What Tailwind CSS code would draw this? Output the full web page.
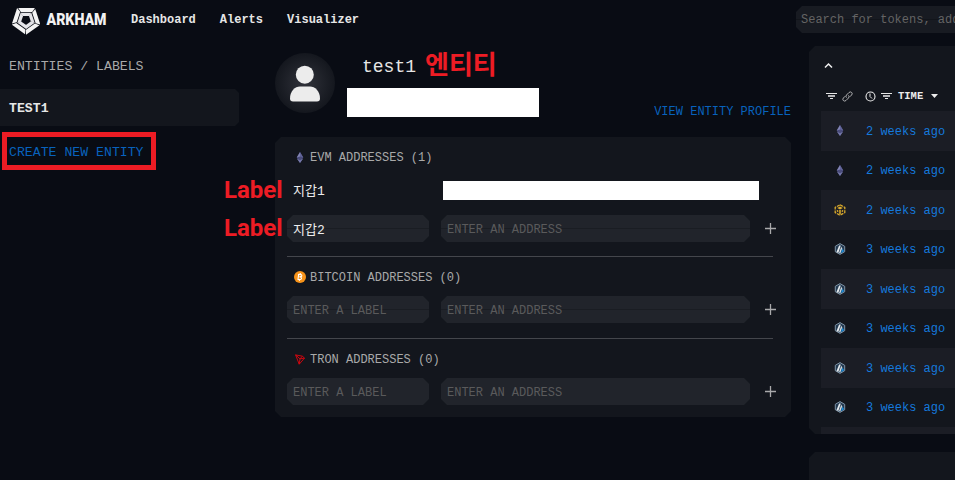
<!DOCTYPE html>
<html lang="en">
<head>
    <meta charset="UTF-8">
    <meta name="viewport" content="width=device-width, initial-scale=1.0">
    <title>Arkham - Entities / Labels</title>
    <script src="https://cdn.jsdelivr.net/npm/@tailwindcss/browser@4"></script>
</head>
<body class="relative h-screen overflow-hidden bg-[#090c14] font-['Liberation_Mono','Noto_Sans_CJK_KR',monospace] text-xs text-[#a9a9a9]">

    <!-- Shared icons -->
    <svg class="hidden">
        <symbol id="blade" viewBox="-14 -14 28 28" overflow="visible">
            <path d="M-7.600-12H8.700L6.100-8H-5z" fill="#f4f4f4"/>
            <path d="M-5.400-7.200H5.200L3-4H-3.200z" fill="#e4e4e8"/>
        </symbol>
        <symbol id="eth" viewBox="0 0 10 14">
            <path d="M5 1L8.500 7 5 13 1.500 7z" fill="#4a4c7c"/>
            <path d="M5 1V6L1.500 7z" fill="#8183b3"/>
            <path d="M5 1L8.500 7 5 6z" fill="#62659a"/>
            <path d="M1.500 8L5 10 8.500 8 5 13z" fill="#7679aa"/>
        </symbol>
        <symbol id="bnb" viewBox="0 0 12 12">
            <path d="M6 .8L10.800 3.400V8.600L6 11.200 1.200 8.600V3.400z" fill="none" stroke="#d9a92c" stroke-width="1.300" stroke-dasharray="3.200 .9"/>
            <path d="M3.200 4L6 2.600 8.800 4 6 5.500zM5.200 6h1.600v4H5.200zM2.800 5.800l1.500.8v1.600l-1.500-.8zM9.200 5.800l-1.500.8v1.600l1.500-.8z" fill="#d9a92c"/>
        </symbol>
        <symbol id="arb" viewBox="0 0 12 12">
            <path d="M6 .6L10.700 3.300V8.700L6 11.400 1.300 8.700V3.300z" fill="#22384f" stroke="#8095a8" stroke-width="1"/>
            <path d="M5.100 2.600H6.800L4.300 9.900 2.500 8.900z" fill="#e4e9ed"/>
            <path d="M7.300 3.400L8.200 5.400 6.300 10.500 5 10.100z" fill="#cfd9e0"/>
            <path d="M8.500 5.400L10 8.300 6.900 10.300z" fill="#1c8fdc"/>
        </symbol>
        <symbol id="filter" viewBox="0 0 11 10">
            <path d="M0 2.500h11" stroke="#e6e6e6"/>
            <path d="M2 5h7" stroke="#b5b5b8" stroke-width="2"/>
            <path d="M4 7.500h3" stroke="#e6e6e6"/>
        </symbol>
        <symbol id="plus" viewBox="0 0 11 11">
            <path d="M5.500 0v11M0 5.500h11" stroke="#a9a9ab" stroke-width="1.300"/>
        </symbol>
    </svg>

    <!-- Header -->
    <header class="flex h-[39px] items-center">
        <svg class="ml-3 h-[28px] w-[28px] shrink-0 translate-y-px" viewBox="-14 -13 28 28">
            <g transform="scale(1.020 1)">
                <use href="#blade" x="-14" y="-14" width="28" height="28"/>
                <use href="#blade" x="-14" y="-14" width="28" height="28" transform="rotate(72)"/>
                <use href="#blade" x="-14" y="-14" width="28" height="28" transform="rotate(144)"/>
                <use href="#blade" x="-14" y="-14" width="28" height="28" transform="rotate(216)"/>
                <use href="#blade" x="-14" y="-14" width="28" height="28" transform="rotate(288)"/>
            </g>
        </svg>
        <svg class="ml-[6px] h-6 w-[62px] shrink-0" viewBox="0 0 62 24">
            <text x=".5" y="17.300" textLength="60" lengthAdjust="spacingAndGlyphs" font-family="Roboto, sans-serif" font-weight="900" font-size="17" fill="#f2f2f2">ARKHAM</text>
        </svg>
        <nav class="ml-[23px] flex gap-6 pt-px font-bold text-[#e6e6e6]">
            <a href="#">Dashboard</a>
            <a href="#">Alerts</a>
            <a href="#">Visualizer</a>
        </nav>
        <div class="ml-auto h-[27px] w-[159px] overflow-hidden bg-[#181b22] bg-[linear-gradient(transparent_13px,#12151b_13px,#12151b_14px,transparent_14px)] pt-px pl-[5px] leading-[27px] whitespace-nowrap text-[#646464] [clip-path:polygon(6px_0,100%_0,100%_100%,6px_100%,0_21px,0_6px)]">Search for tokens, addresses</div>
    </header>

    <div class="flex">
        <!-- Sidebar -->
        <aside class="w-[239px] shrink-0 pt-[18px] text-[13.2px] leading-5">
            <h2 class="pl-[9px]">ENTITIES / LABELS</h2>
            <div class="mt-3 flex h-[37px] items-center bg-[#13161d] pt-[2px] pl-[9px] font-bold text-[#e6e6e6] [clip-path:polygon(0_0,235px_0,100%_4px,100%_33px,235px_100%,0_100%)]">TEST1</div>
            <a href="#" class="mt-[17px] block pl-[9px] text-[#0862bd]">CREATE NEW ENTITY</a>
        </aside>

        <!-- Entity -->
        <main class="ml-9 w-[516px] shrink-0 pt-[14px]">
            <div class="flex h-[84px]">
                <svg class="h-[60px] w-[60px] shrink-0" viewBox="0 0 60 60">
                    <defs>
                        <radialGradient id="avatar">
                            <stop offset="0" stop-color="#30323a"/>
                            <stop offset="1" stop-color="#14171e"/>
                        </radialGradient>
                    </defs>
                    <circle cx="30" cy="30" r="30" fill="url(#avatar)"/>
                    <circle cx="29.800" cy="21.700" r="9" fill="#ececec"/>
                    <path d="M15 45.500C15 38 20 33.500 25 33.500H35C40 33.500 45 38 45 45.500Q45 48.500 42 48.500H18Q15 48.500 15 45.500z" fill="#ececec"/>
                </svg>
                <div class="ml-3 pt-[2px]">
                    <h1 class="pl-[15px] text-lg leading-6 text-[#e6e6e6]">test1</h1>
                    <div class="mt-[9px] h-[29px] w-[192px] bg-white"></div>
                </div>
                <a href="#" class="ml-auto pt-[51px] whitespace-nowrap text-[#0862bd]">VIEW ENTITY PROFILE</a>
            </div>

            <section class="h-[280px] bg-[#13161d] px-3 pt-[10px] [clip-path:polygon(6px_0,510px_0,100%_6px,100%_274px,510px_100%,6px_100%,0_274px,0_6px)]">
                <h3 class="flex h-5 items-center gap-[5px] pl-2">
                    <svg class="h-[13px] w-[10px]"><use href="#eth"/></svg>
                    <span class="pt-px">EVM ADDRESSES (1)</span>
                </h3>
                <div class="mt-[10px] flex h-[27px] items-center">
                    <span class="w-[156px] pt-[3px] pl-[6px] text-[13px] text-[#ececec]">지갑1</span>
                    <div class="h-[19px] w-[316px] bg-white"></div>
                </div>
                <div class="mt-[11px] flex h-[27px] items-center gap-3">
                    <div class="h-[27px] w-[142px] bg-[#21242b] bg-[linear-gradient(transparent_13px,#1a1d23_13px,#1a1d23_14px,transparent_14px)] pt-[2px] pl-[6px] text-[13px] leading-[27px] text-[#ececec] [clip-path:polygon(6px_0,136px_0,100%_6px,100%_21px,136px_100%,6px_100%,0_21px,0_6px)]">지갑2</div>
                    <div class="h-[27px] w-[309px] bg-[#21242b] bg-[linear-gradient(transparent_13px,#1a1d23_13px,#1a1d23_14px,transparent_14px)] pt-[2px] pl-[6px] leading-[27px] text-[#5a5a5b] [clip-path:polygon(6px_0,303px_0,100%_6px,100%_21px,303px_100%,6px_100%,0_21px,0_6px)]">ENTER AN ADDRESS</div>
                    <svg class="ml-[3px] h-[11px] w-[11px]"><use href="#plus"/></svg>
                </div>

                <div class="mt-[14px] h-px w-[486px] bg-[#44464c]"></div>
                <h3 class="mt-[10px] flex h-5 items-center gap-[5px] pl-[7px]">
                    <svg class="-mr-px h-3 w-3" viewBox="0 0 12 12">
                        <circle cx="6" cy="6" r="6" fill="#f7931a"/>
                        <path d="M4.700 3.200L3.900 8.800M4.500 3.300L6.800 3.600Q8.200 4 7.700 5.100 7.200 5.900 5.300 5.800 7.700 6 7.500 7.500 7.200 8.900 4.300 8.500M6.400 2.100L6.200 3.400M5.600 8.700L5.400 9.900" fill="none" stroke="#fff" stroke-width="1.100"/>
                    </svg>
                    <span class="pt-px">BITCOIN ADDRESSES (0)</span>
                </h3>
                <div class="mt-[9px] flex h-[27px] items-center gap-3">
                    <div class="h-[27px] w-[142px] bg-[#21242b] bg-[linear-gradient(transparent_13px,#1a1d23_13px,#1a1d23_14px,transparent_14px)] pt-[2px] pl-[6px] leading-[27px] text-[#5a5a5b] [clip-path:polygon(6px_0,136px_0,100%_6px,100%_21px,136px_100%,6px_100%,0_21px,0_6px)]">ENTER A LABEL</div>
                    <div class="h-[27px] w-[309px] bg-[#21242b] bg-[linear-gradient(transparent_13px,#1a1d23_13px,#1a1d23_14px,transparent_14px)] pt-[2px] pl-[6px] leading-[27px] text-[#5a5a5b] [clip-path:polygon(6px_0,303px_0,100%_6px,100%_21px,303px_100%,6px_100%,0_21px,0_6px)]">ENTER AN ADDRESS</div>
                    <svg class="ml-[3px] h-[11px] w-[11px]"><use href="#plus"/></svg>
                </div>

                <div class="mt-[15px] h-px w-[486px] bg-[#44464c]"></div>
                <h3 class="mt-[10px] flex h-5 items-center gap-[5px] pl-2">
                    <svg class="h-[11px] w-[10px]" viewBox="0 0 10 11">
                        <path d="M.6.900L7.400 2.200 9.500 4.100 4.200 10.200zM.6.900L5 4.900 9.500 4.100M5 4.900L7.400 2.200M5 4.900L4.200 10.200" fill="none" stroke="#e0060f" stroke-width=".9"/>
                    </svg>
                    <span class="pt-px">TRON ADDRESSES (0)</span>
                </h3>
                <div class="mt-[9px] flex h-[27px] items-center gap-3">
                    <div class="h-[27px] w-[142px] bg-[#21242b] pt-[2px] pl-[6px] leading-[27px] text-[#5a5a5b] [clip-path:polygon(6px_0,136px_0,100%_6px,100%_21px,136px_100%,6px_100%,0_21px,0_6px)]">ENTER A LABEL</div>
                    <div class="h-[27px] w-[309px] bg-[#21242b] pt-[2px] pl-[6px] leading-[27px] text-[#5a5a5b] [clip-path:polygon(6px_0,303px_0,100%_6px,100%_21px,303px_100%,6px_100%,0_21px,0_6px)]">ENTER AN ADDRESS</div>
                    <svg class="ml-[3px] h-[11px] w-[11px]"><use href="#plus"/></svg>
                </div>
            </section>
        </main>

        <!-- Transfers -->
        <div class="ml-[18px] w-[146px] shrink-0 pt-[7px]">
            <section class="h-[388px] overflow-hidden bg-[#13161d] pl-3 [clip-path:polygon(6px_0,100%_0,100%_100%,6px_100%,0_382px,0_6px)]">
                <svg class="mt-[16px] ml-[3px] h-[7px] w-[9px]" viewBox="0 0 9 7">
                    <path d="M1 5.500L4.500 2 8 5.500" fill="none" stroke="#f0f0f0" stroke-width="1.500"/>
                </svg>
                <div class="mt-[17px] flex h-[20px] items-center pl-[5px] text-[10.500px] font-bold text-[#ececec]">
                    <svg class="h-[10px] w-[11px]"><use href="#filter"/></svg>
                    <svg class="ml-[5px] h-[11px] w-[11px]" viewBox="0 0 11 11">
                        <path d="M4.500 6.600Q3.300 5.200 4.500 4L7 1.500Q8.400.3 9.700 1.500 10.800 2.700 9.600 4L7.800 5.800M6.500 4.400Q7.700 5.800 6.500 7L4 9.500Q2.600 10.700 1.300 9.500.2 8.300 1.400 7L3.200 5.200" fill="none" stroke="#b0b0b2"/>
                    </svg>
                    <svg class="ml-3 h-[11px] w-[11px]" viewBox="0 0 11 11">
                        <circle cx="5.500" cy="5.500" r="4.500" fill="none" stroke="#ececec" stroke-width="1.100"/>
                        <path d="M5 2.500V5.500L7 7.500" fill="none" stroke="#ececec"/>
                    </svg>
                    <svg class="ml-[5px] h-[10px] w-[11px]"><use href="#filter"/></svg>
                    <span class="ml-[6px]">TIME</span>
                    <svg class="ml-2 h-1 w-[7px]" viewBox="0 0 7 4"><path d="M0 0h7L3.500 4z" fill="#ececec"/></svg>
                </div>
                <div class="mt-[5px] text-[#1579dc]">
                    <div class="flex h-[39.500px] items-center bg-[#1b1d25] pl-[13px]"><svg class="mr-5 h-[13px] w-3"><use href="#eth"/></svg><span class="pt-[1.500px]">2 weeks ago</span></div>
                    <div class="flex h-[39.500px] items-center pl-[13px]"><svg class="mr-5 h-[13px] w-3"><use href="#eth"/></svg><span class="pt-[1.500px]">2 weeks ago</span></div>
                    <div class="flex h-[39.500px] items-center bg-[#1b1d25] pl-[13px]"><svg class="mr-5 h-3 w-3"><use href="#bnb"/></svg><span class="pt-[1.500px]">2 weeks ago</span></div>
                    <div class="flex h-[39.500px] items-center pl-[13px]"><svg class="mr-5 h-3 w-3"><use href="#arb"/></svg><span class="pt-[1.500px]">3 weeks ago</span></div>
                    <div class="flex h-[39.500px] items-center bg-[#1b1d25] pl-[13px]"><svg class="mr-5 h-3 w-3"><use href="#arb"/></svg><span class="pt-[1.500px]">3 weeks ago</span></div>
                    <div class="flex h-[39.500px] items-center pl-[13px]"><svg class="mr-5 h-3 w-3"><use href="#arb"/></svg><span class="pt-[1.500px]">3 weeks ago</span></div>
                    <div class="flex h-[39.500px] items-center bg-[#1b1d25] pl-[13px]"><svg class="mr-5 h-3 w-3"><use href="#arb"/></svg><span class="pt-[1.500px]">3 weeks ago</span></div>
                    <div class="flex h-[39.500px] items-center pl-[13px]"><svg class="mr-5 h-3 w-3"><use href="#arb"/></svg><span class="pt-[1.500px]">3 weeks ago</span></div>
                    <div class="h-[39.500px] bg-[#1b1d25]"></div>
                </div>
            </section>
            <section class="mt-[18px] h-10 bg-[#13161d] [clip-path:polygon(6px_0,100%_0,100%_100%,0_100%,0_6px)]"></section>
        </div>
    </div>

    <!-- Red notes on top of the page -->
    <div class="absolute top-[132px] left-[2px] h-[38px] w-[154px] border-[5px] border-[#ed1c24]"></div>
    <div class="absolute top-[45px] left-[425px] font-['Noto_Sans_CJK_KR',sans-serif] text-[26px] leading-9 font-bold text-[#ed1c24]">엔티티</div>
    <div class="absolute top-[172px] left-[224px] font-['Roboto',sans-serif] text-[24px] leading-9 font-bold text-[#ed1c24]">Label</div>
    <div class="absolute top-[210px] left-[224px] font-['Roboto',sans-serif] text-[24px] leading-9 font-bold text-[#ed1c24]">Label</div>
</body>
</html>
